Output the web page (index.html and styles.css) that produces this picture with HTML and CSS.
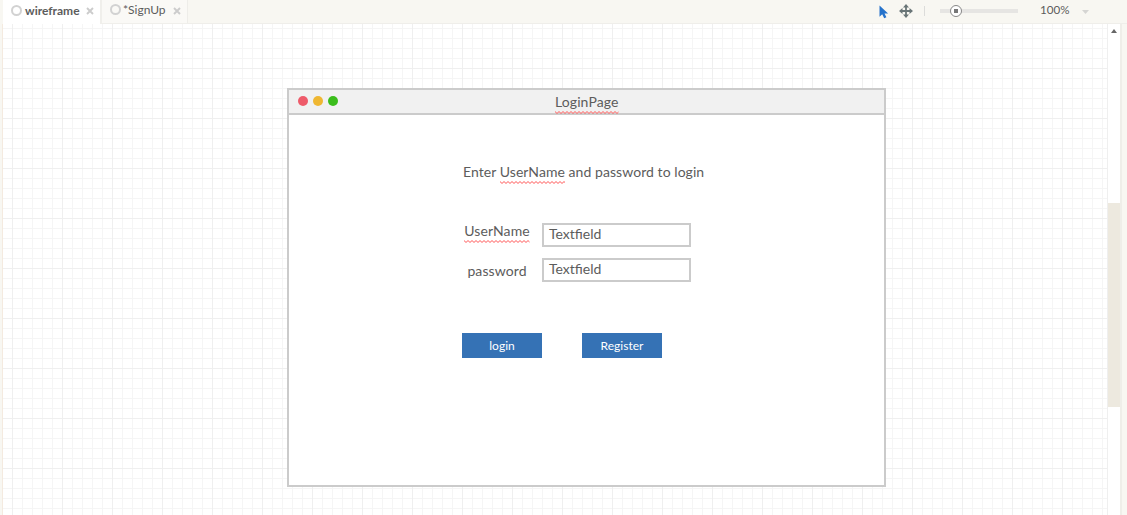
FILE: index.html
```html
<!DOCTYPE html>
<html lang="en">
<head>
<meta charset="utf-8">
<title>wireframe</title>
<link rel="stylesheet" href="styles.css">
</head>
<body>
<svg class="defs" width="0" height="0" aria-hidden="true">
  <defs>
    <pattern id="wave" width="4" height="3" patternUnits="userSpaceOnUse">
      <path d="M-1 1.5L0 .5 2 2.5 4 .5 5 1.5" fill="none" stroke="#ff5050" stroke-width="1"/>
    </pattern>
  </defs>
</svg>
<header class="topbar">
  <nav class="tabs">
    <div class="tab tab-active">
      <span class="ring"></span><span class="tab-name">wireframe</span>
      <svg class="close" viewBox="0 0 8 8"><path d="M1 1l6 6M7 1L1 7"/></svg>
    </div>
    <div class="tab tab-idle">
      <span class="ring"></span><span class="tab-name">*SignUp</span>
      <svg class="close" viewBox="0 0 8 8"><path d="M1 1l6 6M7 1L1 7"/></svg>
    </div>
  </nav>
  <div class="tools">
    <svg class="pointer" viewBox="0 0 10 14"><path d="M.5.5v11.3l2.7-2.5 2 4 2.2-1-1.9-3.8h3.6z" fill="#2673cb"/></svg>
    <svg class="move" viewBox="0 0 14 14"><path d="M7 2v10M2 7h10" stroke="#697577" stroke-width="1.8"/><path d="M7 0l3 3.5H4zM7 14l3-3.5H4zM0 7l3.5-3v6zM14 7l-3.5-3v6z" fill="#697577"/></svg>
    <span class="divider"></span>
    <div class="slider"><span class="knob"></span></div>
    <span class="zoom">100%</span>
    <svg class="caret" viewBox="0 0 7 4"><path d="M0 0h7L3.5 4z" fill="#d5d5d3"/></svg>
  </div>
</header>
<div class="workspace">
  <main class="canvas">
    <section class="window">
      <div class="titlebar">
        <div class="lights"><span class="light red"></span><span class="light yellow"></span><span class="light green"></span></div>
        <span class="title misspelt">LoginPage<svg class="squiggle"><rect width="100%" height="3" fill="url(#wave)"/></svg></span>
      </div>
      <div class="form">
        <div class="prompt">Enter <span class="misspelt">UserName<svg class="squiggle"><rect width="100%" height="3" fill="url(#wave)"/></svg></span> and password to login</div>
        <div class="row">
          <div class="label"><span class="misspelt">UserName<svg class="squiggle"><rect width="100%" height="3" fill="url(#wave)"/></svg></span></div>
          <div class="field">Textfield</div>
        </div>
        <div class="row row-password">
          <div class="label">password</div>
          <div class="field">Textfield</div>
        </div>
        <div class="actions"><div class="button">login</div><div class="button">Register</div></div>
      </div>
    </section>
  </main>
  <aside class="scrollbar">
    <svg class="arrow" viewBox="0 0 6 4"><path d="M0 4h6L3 0z" fill="#666"/></svg>
    <div class="thumb"></div>
  </aside>
</div>
</body>
</html>
```
FILE: styles.css
```css
* { box-sizing: border-box; }
body {
  margin: 0;
  height: 515px;
  overflow: hidden;
  background: #f8f7f2;
  color: #5c5c5c;
  font-family: Lato, sans-serif;
  font-size: 14px;
  line-height: 20px;
}
svg { display: block; flex: none; }
.defs { position: absolute; }

.topbar { display: flex; justify-content: space-between; height: 24px; padding-left: 3px; }
.tabs { display: flex; }
.tab { display: flex; height: 24px; font-size: 12px; }
.tab-active { width: 97px; padding-left: 8px; background: #fff; font-weight: 700; }
.tab-idle {
  width: 88px;
  padding-left: 8px;
  background: #faf9f6;
  border-left: 2px solid #f0efeb;
  border-right: 1px solid #eeede9;
  border-bottom: 1px solid #f0efeb;
}
.ring { flex: none; width: 11px; height: 11px; margin-top: 5px; border: 2px solid #d2d2d2; border-radius: 50%; }
.tab-idle .ring { margin-top: 4px; }
.tab-name { width: 56px; margin-left: 3px; line-height: 22px; }
.tab-idle .tab-name { width: 47px; margin-left: 2px; line-height: 20px; }
.close { width: 8px; height: 8px; margin: 7px 0 0 5px; fill: none; stroke: #ccc; stroke-width: 1.9; }
.tab-idle .close { margin-left: 3px; }

.tools { display: flex; flex: 1; padding-left: 691px; border-bottom: 1px solid #efeeea; }
.pointer { width: 10px; height: 14px; margin-top: 5px; }
.move { width: 14px; height: 14px; margin: 4px 0 0 10px; }
.divider { width: 1px; height: 10px; margin: 6px 0 0 11px; background: #dcdcda; }
.slider { width: 78px; height: 4px; margin: 9px 0 0 15px; background: #e6e5e3; }
.knob {
  display: block;
  width: 12px;
  height: 12px;
  margin: -4px 0 0 9.5px;
  border: 1px solid #888;
  border-radius: 50%;
  background: linear-gradient(#777, #777) center / 4px 4px no-repeat #fff;
}
.zoom { width: 34px; margin-left: 22px; font-size: 11.6px; }
.caret { width: 7px; height: 4px; margin: 10px 0 0 8px; }

.workspace { display: flex; height: 491px; padding-left: 2px; }
.canvas {
  width: 1105px;
  padding: 64px 0 0 284px;
  border-left: 1px solid #f4eadf;
  background-color: #fff;
  background-image:
    linear-gradient(90deg, #efefef 1px, transparent 1px),
    linear-gradient(#efefef 1px, transparent 1px),
    linear-gradient(90deg, #f5f5f5 1px, transparent 1px),
    linear-gradient(#f5f5f5 1px, transparent 1px);
  background-size: 50px 50px, 50px 50px, 10px 10px, 10px 10px;
  background-position: 9px 0, 0 44px, 9px 0, 0 4px;
}
.window { width: 599px; height: 399px; border: 2px solid #cbcbcb; background: #fff; }
.titlebar { display: flex; align-items: flex-start; height: 25px; background: #f1f1f1; border-bottom: 2px solid #cbcbcb; }
.lights { display: flex; gap: 5px; width: 266px; padding: 6px 0 0 9px; }
.light { width: 10px; height: 10px; border-radius: 50%; }
.red { background: #ee5b6a; }
.yellow { background: #efb732; }
.green { background: #3bbd1c; }
.title { margin-top: 2px; letter-spacing: .1px; }
.misspelt { position: relative; display: inline-block; }
.squiggle { position: absolute; left: 0; bottom: -2px; width: 100%; height: 3px; }

.form { padding: 47px 0 0 173px; }
.prompt { margin-left: 1px; letter-spacing: .06px; white-space: nowrap; }
.row { display: flex; margin-top: 41px; }
.row-password { margin-top: 11px; }
.label { width: 70px; margin: -2px 10px 0 0; letter-spacing: .1px; text-align: center; }
.row-password .label { padding-top: 5px; }
.field { width: 149px; height: 24px; padding-left: 5px; border: 2px solid #cbcbcb; background: #fff; line-height: 18px; }
.actions { display: flex; gap: 40px; margin-top: 51px; }
.button { width: 80px; height: 25px; background: #3572b5; color: #fff; font-size: 12px; line-height: 25px; text-align: center; }

.scrollbar { width: 15px; border-left: 1px solid #efefef; border-right: 2px solid #efeee9; background: #fff; }
.arrow { width: 6px; height: 4px; margin: 5px 0 0 3px; }
.thumb { height: 204px; margin-top: 170px; background: #ede9df; }
```
